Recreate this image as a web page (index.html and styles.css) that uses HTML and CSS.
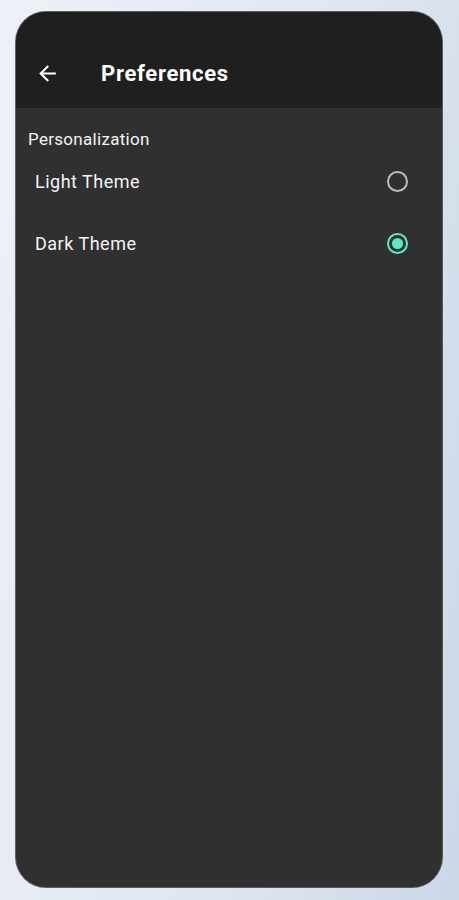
FILE: index.html
```html
<!DOCTYPE html>
<html lang="en">
<head>
    <meta charset="UTF-8">
    <meta name="viewport" content="width=device-width, initial-scale=1.0">
    <title>Preferences</title>
    <link rel="stylesheet" href="styles.css">
</head>
<body>
    <div class="phone">
        <header class="app-bar">
            <button class="back-btn" aria-label="Back">
                <svg width="25" height="25" viewBox="0 0 24 24">
                    <path d="M20 11H7.83l5.59-5.59L12 4l-8 8 8 8 1.41-1.41L7.83 13H20v-2z" fill="#ffffff"/>
                </svg>
            </button>
            <h1>Preferences</h1>
        </header>

        <main class="content">
            <h2 class="section-title">Personalization</h2>

            <label class="option">
                <span>Light Theme</span>
                <span class="radio"></span>
            </label>
            <label class="option">
                <span>Dark Theme</span>
                <span class="radio checked"></span>
            </label>
        </main>
    </div>
</body>
</html>
```

FILE: styles.css
```css
:root {
    --bar-color: #1f1f1f;
    --surface-color: #303030;
    --accent-color: #5ee8c6;
    --text-color: #f4f4f4;
}

body {
    margin: 0;
    padding: 12px 17px 13px 16px;
    min-height: 900px;
    box-sizing: border-box;
    background: linear-gradient(100deg, #edf1f8 0%, #dfe6f0 60%, #cbd7e7 100%);
    font-family: Roboto, 'Liberation Sans', Arial, sans-serif;
}

.phone {
    height: 875px;
    border-radius: 30px;
    overflow: hidden;
    background-color: var(--surface-color);
    display: flex;
    flex-direction: column;
    box-shadow: 0 0 0 1px rgba(0,0,0,0.6);
}

.app-bar {
    height: 96px;
    flex-shrink: 0;
    background-color: var(--bar-color);
    display: flex;
    align-items: center;
    padding: 26px 0 0 19px;
    gap: 41px;
    box-sizing: border-box;
}

.back-btn {
    background: none;
    border: none;
    padding: 0;
    width: 25px;
    height: 25px;
    cursor: pointer;
}

.app-bar h1 {
    margin: 0;
    color: #ffffff;
    font-size: 22px;
    font-weight: 700;
    letter-spacing: 0.7px;
}

.content {
    padding: 21px 0 0 12px;
}

.section-title {
    margin: 0;
    font-size: 17px;
    font-weight: 400;
    letter-spacing: 0.3px;
    color: var(--text-color);
    line-height: 20px;
}

.option {
    display: flex;
    align-items: center;
    justify-content: space-between;
    height: 62px;
    padding: 0 34px 0 7px;
    color: var(--text-color);
    font-size: 18px;
    letter-spacing: 0.5px;
    cursor: pointer;
}

.option:first-of-type {
    margin-top: 1px;
}

.radio {
    width: 21px;
    height: 21px;
    box-sizing: border-box;
    border: 2.5px solid #bdbdbd;
    border-radius: 50%;
    display: flex;
    align-items: center;
    justify-content: center;
}

.radio.checked {
    border-color: var(--accent-color);
}

.radio.checked::after {
    content: "";
    width: 11px;
    height: 11px;
    border-radius: 50%;
    background-color: var(--accent-color);
}
```
